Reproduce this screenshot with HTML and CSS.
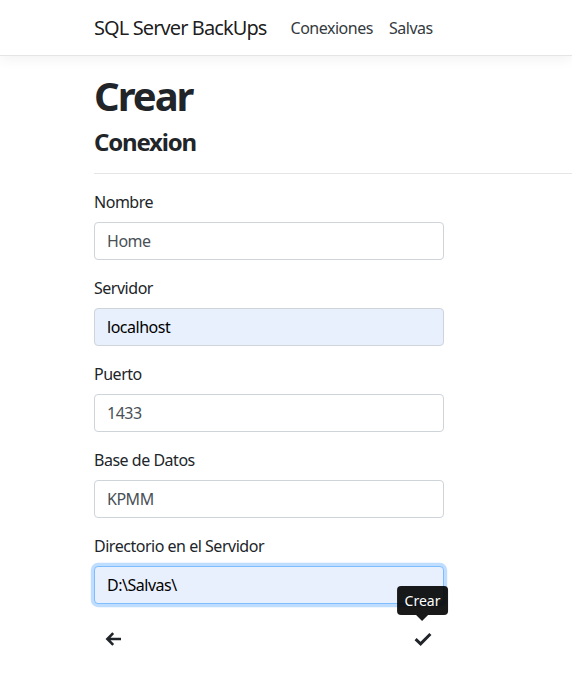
FILE: index.html
```html
<!DOCTYPE html>
<html lang="es">
<head>
<meta charset="utf-8">
<title>Crear - SQL Server BackUps</title>
<link rel="stylesheet" href="styles.css">
</head>
<body>
<header class="navbar">
  <a class="brand" href="#">SQL Server BackUps</a>
  <nav class="nav">
    <a class="nav-link" href="#">Conexiones</a>
    <a class="nav-link" href="#">Salvas</a>
  </nav>
</header>
<main class="main">
  <h1 class="title">Crear</h1>
  <h4 class="subtitle">Conexion</h4>
  <hr class="divider">
  <form class="form">
    <div class="group">
      <label class="label">Nombre</label>
      <div class="input">Home</div>
    </div>
    <div class="group">
      <label class="label">Servidor</label>
      <div class="input autofill">localhost</div>
    </div>
    <div class="group">
      <label class="label">Puerto</label>
      <div class="input">1433</div>
    </div>
    <div class="group">
      <label class="label">Base de Datos</label>
      <div class="input">KPMM</div>
    </div>
    <div class="group">
      <label class="label">Directorio en el Servidor</label>
      <div class="input autofill focus">D:\Salvas\</div>
    </div>
    <div class="actions">
      <button type="button" class="btn">
        <svg class="icon" width="17" height="16" viewBox="0 0 17 16"><path d="M16 8H2.5M8.2 2.2L2.4 8l5.8 5.8" fill="none" stroke="#212529" stroke-width="2.6" stroke-linecap="butt" stroke-linejoin="miter"/></svg>
      </button>
      <button type="button" class="btn btn-check">
        <svg class="icon" width="18" height="16" viewBox="0 0 18 16"><path d="M1.6 8.2l5 4.6L16.4 3" fill="none" stroke="#212529" stroke-width="3" stroke-linejoin="miter"/></svg>
        <span class="tooltip">Crear</span>
      </button>
    </div>
  </form>
</main>
</body>
</html>
```

FILE: styles.css
```css
* { box-sizing: border-box; }
html, body { margin: 0; padding: 0; }
body {
  font-family: "Segoe UI", "Noto Sans", "Open Sans", sans-serif;
  font-size: 16px;
  line-height: 1.5;
  letter-spacing: -0.03em;
  color: #212529;
  background: #fff;
}
.navbar {
  height: 56px;
  display: flex;
  align-items: center;
  padding: 0 0 0 94px;
  background: #fff;
  border-bottom: 1px solid #e5e5e5;
  box-shadow: 0 4px 12px rgba(0,0,0,.05);
  margin-bottom: 16px;
}
.brand {
  font-size: 20px;
  line-height: 30px;
  letter-spacing: -0.045em;
  color: rgba(0,0,0,.9);
  text-decoration: none;
  margin-right: 16px;
}
.nav { display: flex; }
.nav-link {
  padding: 8px;
  color: #343a40;
  text-decoration: none;
}
.main {
  padding-left: 94px;
}
.title {
  font-size: 40px;
  font-weight: 700;
  line-height: 1.2;
  letter-spacing: -0.05em;
  margin: 0 0 8px;
}
.subtitle {
  font-size: 24px;
  font-weight: 700;
  line-height: 1.2;
  letter-spacing: -0.05em;
  margin: 0 0 8px;
}
.divider {
  border: 0;
  border-top: 1px solid rgba(0,0,0,.1);
  margin: 16px 0;
  height: 0;
}
.form { width: 350px; }
.group { margin-bottom: 16px; }
.label {
  display: block;
  margin-bottom: 8px;
}
.input {
  height: 38px;
  padding: 6px 12px;
  border: 1px solid #ced4da;
  border-radius: 4px;
  color: #495057;
  background: #fff;
  line-height: 24px;
}
.input.autofill {
  background: #e8f0fe;
  color: #000;
}
.input.focus {
  border-color: #80bdff;
  box-shadow: 0 0 0 3.2px rgba(0,123,255,.25);
}
.actions {
  display: flex;
  justify-content: space-between;
}
.btn {
  position: relative;
  height: 38px;
  padding: 6px 12px 6px 10px;
  border: 1px solid transparent;
  background: transparent;
  display: flex;
  align-items: center;
  justify-content: center;
  cursor: pointer;
}
.btn-check { padding: 6px 11px 6px 12px; }
.icon { display: block; }
.tooltip {
  position: absolute;
  bottom: calc(100% + 6px);
  left: 50%;
  transform: translateX(-50%);
  background: rgba(0,0,0,.9);
  color: #fff;
  font-size: 14px;
  line-height: 21px;
  padding: 4px 8px;
  border-radius: 4px;
  white-space: nowrap;
  font-family: "Segoe UI", "Noto Sans", "Open Sans", sans-serif;
}
.tooltip::after {
  content: "";
  position: absolute;
  top: 100%;
  left: 50%;
  margin-left: -6px;
  border-width: 6px 6px 0;
  border-style: solid;
  border-color: rgba(0,0,0,.9) transparent transparent;
}
```
